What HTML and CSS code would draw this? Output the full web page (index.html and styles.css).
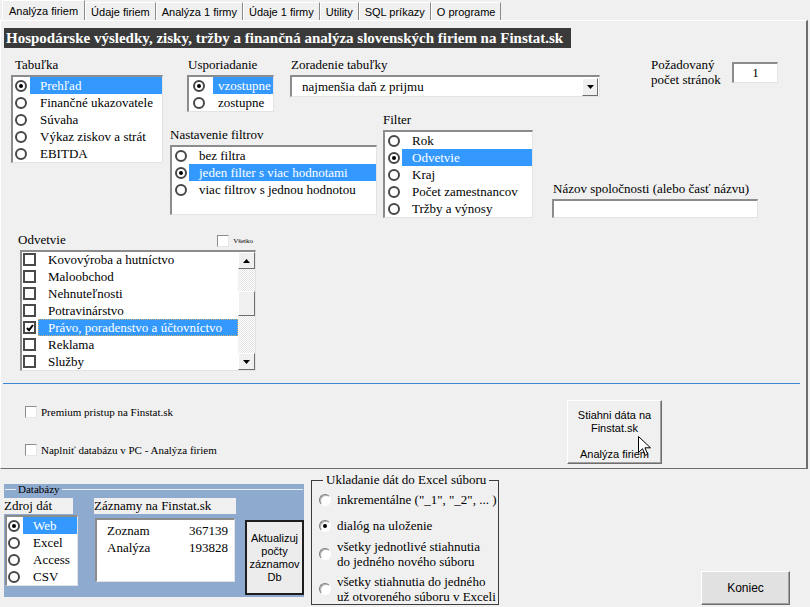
FILE: index.html
```html
<!DOCTYPE html>
<html lang="sk">
<head>
<meta charset="UTF-8">
<title>Analýza firiem</title>
<link rel="stylesheet" href="styles.css">
</head>
<body>
<div class="form">
  <!-- záložky -->
  <div class="tabs">
    <span class="tab active">Analýza firiem</span>
    <span class="tab">Údaje firiem</span>
    <span class="tab">Analýza 1 firmy</span>
    <span class="tab">Údaje 1 firmy</span>
    <span class="tab">Utility</span>
    <span class="tab">SQL príkazy</span>
    <span class="tab">O programe</span>
  </div>

  <div class="page">
    <div class="title">Hospodárske výsledky, zisky, tržby a finančná analýza slovenských firiem na Finstat.sk</div>

    <div class="top">
      <div class="tabulka">
        <div class="lbl">Tabuľka</div>
        <div class="list list-tab">
          <div class="opt sel"><span class="radio on"></span><span class="txt">Prehľad</span></div>
          <div class="opt"><span class="radio"></span><span class="txt">Finančné ukazovatele</span></div>
          <div class="opt"><span class="radio"></span><span class="txt">Súvaha</span></div>
          <div class="opt"><span class="radio"></span><span class="txt">Výkaz ziskov a strát</span></div>
          <div class="opt"><span class="radio"></span><span class="txt">EBITDA</span></div>
        </div>
      </div>

      <div class="mid">
        <div class="row1">
          <div class="uspor">
            <div class="lbl">Usporiadanie</div>
            <div class="list list-usp">
              <div class="opt sel"><span class="radio on"></span><span class="txt">vzostupne</span></div>
              <div class="opt"><span class="radio"></span><span class="txt">zostupne</span></div>
            </div>
          </div>
          <div class="zorad">
            <div class="lbl">Zoradenie tabuľky</div>
            <div class="combo">
              <span class="combo-txt">najmenšia daň z prijmu</span>
              <span class="drop"><svg width="7" height="4" viewBox="0 0 7 4"><path d="M0 0h7L3.5 4z" fill="#000"/></svg></span>
            </div>
          </div>
          <div class="pozad">
            <div class="pozad-txt">Požadovaný<br>počet stránok</div>
            <div class="field num">1</div>
          </div>
        </div>

        <div class="row2">
          <div class="nastav">
            <div class="lbl">Nastavenie filtrov</div>
            <div class="list list-nas">
              <div class="opt"><span class="radio"></span><span class="txt">bez filtra</span></div>
              <div class="opt sel"><span class="radio on"></span><span class="txt">jeden filter s viac hodnotami</span></div>
              <div class="opt"><span class="radio"></span><span class="txt">viac filtrov s jednou hodnotou</span></div>
            </div>
          </div>
          <div class="filter">
            <div class="lbl">Filter</div>
            <div class="list list-fil">
              <div class="opt"><span class="radio"></span><span class="txt">Rok</span></div>
              <div class="opt sel"><span class="radio on"></span><span class="txt">Odvetvie</span></div>
              <div class="opt"><span class="radio"></span><span class="txt">Kraj</span></div>
              <div class="opt"><span class="radio"></span><span class="txt">Počet zamestnancov</span></div>
              <div class="opt"><span class="radio"></span><span class="txt">Tržby a výnosy</span></div>
            </div>
          </div>
          <div class="nazov">
            <div class="lbl">Názov spoločnosti (alebo časť názvu)</div>
            <div class="field name"></div>
          </div>
        </div>
      </div>
    </div>

    <!-- odvetvia -->
    <div class="sector">
      <div class="sector-head">
        <span class="lbl">Odvetvie</span>
        <span class="all"><span class="cb3d"></span><span class="tiny">Všetko</span></span>
      </div>
      <div class="list list-sec">
        <div class="rows">
          <div class="opt"><span class="cb"></span><span class="txt">Kovovýroba a hutníctvo</span></div>
          <div class="opt"><span class="cb"></span><span class="txt">Maloobchod</span></div>
          <div class="opt"><span class="cb"></span><span class="txt">Nehnuteľnosti</span></div>
          <div class="opt"><span class="cb"></span><span class="txt">Potravinárstvo</span></div>
          <div class="opt sel focus"><span class="cb"><svg width="8" height="8" viewBox="0 0 8 8"><path d="M1 4l2 2.2L7 1" fill="none" stroke="#000" stroke-width="2"/></svg></span><span class="txt">Právo, poradenstvo a účtovníctvo</span></div>
          <div class="opt"><span class="cb"></span><span class="txt">Reklama</span></div>
          <div class="opt"><span class="cb"></span><span class="txt">Služby</span></div>
        </div>
        <div class="scroll">
          <span class="sb-btn"><svg width="7" height="4" viewBox="0 0 7 4"><path d="M0 4h7L3.5 0z" fill="#000"/></svg></span>
          <span class="thumb"></span>
          <span class="sb-btn down"><svg width="7" height="4" viewBox="0 0 7 4"><path d="M0 0h7L3.5 4z" fill="#000"/></svg></span>
        </div>
      </div>
    </div>

    <div class="sep"></div>

    <div class="actions">
      <div class="checks">
        <div class="chk"><span class="cb3d"></span>Premium pristup na Finstat.sk</div>
        <div class="chk"><span class="cb3d"></span>Naplniť databázu v PC - Analýza firiem</div>
      </div>
      <div class="btn btn-get">
        Stiahni dáta na<br>Finstat.sk<br><br>Analýza firiem
        <svg class="cursor" width="13" height="21" viewBox="0 0 13 21"><path d="M0.5 0.5v16l4-3.8 2.8 6.6 2.4-1-2.8-6.5h5.6z" fill="#fff" stroke="#000"/></svg>
      </div>
    </div>
  </div>

  <!-- spodná časť formulára -->
  <div class="footer">
    <div class="db">
      <div class="db-legend"><span>Databázy</span></div>
      <div class="db-body">
        <div class="src">
          <div class="src-lbl">Zdroj dát</div>
          <div class="list list-src">
            <div class="opt sel"><span class="radio on"></span><span class="txt">Web</span></div>
            <div class="opt"><span class="radio"></span><span class="txt">Excel</span></div>
            <div class="opt"><span class="radio"></span><span class="txt">Access</span></div>
            <div class="opt"><span class="radio"></span><span class="txt">CSV</span></div>
          </div>
        </div>
        <div class="rec">
          <div class="rec-lbl">Záznamy na Finstat.sk</div>
          <div class="list list-rec">
            <div class="rec-row"><span>Zoznam</span><span>367139</span></div>
            <div class="rec-row"><span>Analýza</span><span>193828</span></div>
          </div>
        </div>
        <div class="btn btn-upd">Aktualizuj<br>počty<br>záznamov<br>Db</div>
      </div>
    </div>

    <fieldset class="save">
      <legend>Ukladanie dát do Excel súboru</legend>
      <div class="sv-opt o1"><span class="rb"></span><span>inkrementálne ("_1", "_2", ... )</span></div>
      <div class="sv-opt o2"><span class="rb on"></span><span>dialóg na uloženie</span></div>
      <div class="sv-opt o3"><span class="rb"></span><span>všetky jednotlivé stiahnutia<br>do jedného nového súboru</span></div>
      <div class="sv-opt o4"><span class="rb"></span><span>všetky stiahnutia do jedného<br>už otvoreného súboru v Exceli</span></div>
    </fieldset>

    <div class="btn btn-end">Koniec</div>
  </div>
</div>
</body>
</html>
```

FILE: styles.css
```css
* {
    box-sizing: border-box;
}

body {
    margin: 0;
    background-color: #f0f0f0;
    font-family: "Liberation Serif", "Times New Roman", serif;
    font-size: 13px;
    color: #000;
}

.form {
    width: 810px;
    height: 607px;
    overflow: hidden;
}

/* záložky */
.tabs {
    display: flex;
    height: 20px;
    padding-left: 2px;
    font-family: "Liberation Sans", Arial, sans-serif;
    font-size: 11px;
}

.tab {
    height: 18px;
    margin-top: 2px;
    padding: 2px 5px 0 5px;
    border-top: 1px solid #fff;
    border-left: 1px solid #fff;
    border-right: 1px solid #8a8a8a;
    line-height: 14px;
    white-space: nowrap;
}

.tab.active {
    height: 20px;
    margin-top: 0;
    padding: 3px 6px 0 6px;
}

/* stránka záložky */
.page {
    width: 808px;
    height: 449px;
    border-top: 1px solid #fff;
    border-left: 1px solid #fff;
    border-right: 2px solid #6e6e6e;
    border-bottom: 1px solid #6e6e6e;
}

.title {
    margin: 7px 0 0 3px;
    width: 567px;
    height: 20px;
    padding-left: 2px;
    background-color: #3a3a3a;
    color: #fff;
    font-weight: bold;
    font-size: 15px;
    line-height: 20px;
    white-space: nowrap;
    overflow: hidden;
}

.lbl {
    height: 16px;
    line-height: 16px;
    margin-bottom: 2px;
    white-space: nowrap;
}

/* zoznamy */
.list {
    background-color: #fff;
    border-style: solid;
    border-width: 2px 1px 1px 2px;
    border-color: #8c8c8c #e3e3e3 #e3e3e3 #8c8c8c;
    overflow: hidden;
}

.opt {
    display: flex;
    align-items: center;
    height: 17px;
    padding-left: 3px;
}

.txt {
    flex: 1;
    height: 17px;
    line-height: 17px;
    margin-left: 2px;
    padding-left: 10px;
    white-space: nowrap;
}

.sel .txt {
    background-color: #3399ff;
    color: #fff;
}

.focus .txt {
    outline: 1px dotted #c8b070;
    outline-offset: -1px;
}

.radio {
    position: relative;
    flex: none;
    width: 12px;
    height: 12px;
    border: 2px solid #474747;
    border-radius: 50%;
    background-color: #fff;
}

.radio.on::after {
    content: "";
    position: absolute;
    left: 2px;
    top: 2px;
    width: 4px;
    height: 4px;
    border-radius: 50%;
    background-color: #000;
}

.cb {
    display: flex;
    align-items: center;
    justify-content: center;
    flex: none;
    width: 13px;
    height: 13px;
    border: 2px solid #4a4a4a;
    background-color: #fff;
}

.cb3d {
    flex: none;
    width: 12px;
    height: 12px;
    background-color: #fff;
    border-style: solid;
    border-width: 1px;
    border-color: #8c8c8c #e6e6e6 #e6e6e6 #8c8c8c;
}

.field {
    background-color: #fff;
    border-style: solid;
    border-width: 2px 1px 1px 2px;
    border-color: #8c8c8c #e3e3e3 #e3e3e3 #8c8c8c;
}

/* horná časť */
.top {
    display: flex;
    margin-top: 9px;
    padding-left: 10px;
}

.tabulka {
    width: 152px;
}

.tabulka .lbl {
    padding-left: 4px;
}

.list-tab {
    height: 88px;
}

.list-tab .opt {
    padding-left: 2px;
}

.list-tab .txt {
    margin-left: 3px;
}

.mid {
    display: flex;
    flex-direction: column;
    margin-left: 7px;
}

.row1 {
    display: flex;
    height: 55px;
}

.uspor {
    width: 87px;
    margin-left: 17px;
}

.uspor .lbl {
    padding-left: 1px;
}

.list-usp {
    height: 37px;
}

.list-usp .opt {
    padding-left: 4px;
}

.list-usp .txt {
    margin-left: 8px;
    padding-left: 5px;
}

.zorad {
    width: 310px;
    margin-left: 16px;
}

.zorad .lbl {
    padding-left: 1px;
}

.combo {
    display: flex;
    align-items: center;
    height: 22px;
    background-color: #fff;
    border-style: solid;
    border-width: 2px 1px 1px 2px;
    border-color: #8c8c8c #e3e3e3 #e3e3e3 #8c8c8c;
}

.combo-txt {
    flex: 1;
    padding-left: 10px;
}

.drop {
    display: flex;
    align-items: center;
    justify-content: center;
    width: 16px;
    height: 18px;
    margin-right: 1px;
    background-color: #f0f0f0;
    border: 1px solid;
    border-color: #fff #6e6e6e #6e6e6e #fff;
}

.pozad {
    display: flex;
    margin-left: 51px;
}

.pozad-txt {
    width: 81px;
    line-height: 15px;
}

.num {
    width: 46px;
    height: 21px;
    margin-top: 5px;
    text-align: center;
    line-height: 18px;
}

.row2 {
    display: flex;
    align-items: flex-start;
}

.nastav {
    width: 207px;
    margin-top: 15px;
}

.list-nas {
    height: 70px;
}

.filter {
    width: 150px;
    margin-left: 6px;
}

.list-fil {
    height: 88px;
}

.nazov {
    margin-left: 19px;
    margin-top: 69px;
}

.nazov .lbl {
    padding-left: 1px;
}

.name {
    width: 206px;
    height: 19px;
}

/* odvetvia */
.sector {
    width: 238px;
    margin: 14px 0 0 17px;
}

.sector-head {
    display: flex;
    align-items: center;
    height: 18px;
}

.all {
    display: flex;
    align-items: center;
    margin-left: auto;
    margin-right: 3px;
}

.tiny {
    margin-left: 4px;
    font-size: 7px;
}

.list-sec {
    display: flex;
    height: 121px;
    margin-left: 2px;
}

.rows {
    flex: 1;
    margin-top: -1px;
}

.list-sec .opt {
    padding-left: 1px;
}

.scroll {
    display: flex;
    flex-direction: column;
    width: 17px;
    background: repeating-conic-gradient(#fff 0 25%, #e4e4e4 0 50%) 0 0 / 2px 2px;
}

.sb-btn {
    display: flex;
    align-items: center;
    justify-content: center;
    height: 17px;
    background-color: #f0f0f0;
    border: 1px solid;
    border-color: #fff #6e6e6e #6e6e6e #fff;
}

.thumb {
    height: 25px;
    margin-top: 22px;
    background-color: #f0f0f0;
    border: 1px solid;
    border-color: #fff #6e6e6e #6e6e6e #fff;
}

.sb-btn.down {
    margin-top: auto;
}

.sep {
    width: 797px;
    height: 1px;
    margin: 12px 0 0 2px;
    background-color: #3d86d6;
}

/* spodok záložky */
.actions {
    display: flex;
    margin-top: 16px;
}

.checks {
    width: 542px;
    margin-left: 24px;
    padding-top: 5px;
    font-size: 11px;
}

.chk {
    display: flex;
    align-items: center;
    height: 14px;
    white-space: nowrap;
}

.chk + .chk {
    margin-top: 24px;
}

.chk .cb3d {
    margin-right: 4px;
}

.btn {
    font-family: "Liberation Sans", Arial, sans-serif;
    font-size: 11px;
    text-align: center;
    background-color: #f0f0f0;
    border: 1px solid;
    border-color: #fff #6e6e6e #6e6e6e #fff;
    box-shadow: inset -1px -1px 0 #a0a0a0;
}

.btn-get {
    position: relative;
    width: 95px;
    height: 64px;
    padding-top: 8px;
    line-height: 13px;
}

.cursor {
    position: absolute;
    left: 70px;
    top: 35px;
}

/* spodná časť */
.footer {
    display: flex;
    align-items: flex-start;
    padding-left: 4px;
}

.db {
    width: 300px;
    height: 113px;
    margin-top: 15px;
    background-color: #8eabcf;
}

.db-legend {
    display: flex;
    align-items: center;
    height: 11px;
    margin: 0 1px;
    font-size: 11px;
    line-height: 11px;
}

.db-legend::before {
    content: "";
    width: 11px;
    border-top: 1px solid #e8eef6;
}

.db-legend::after {
    content: "";
    flex: 1;
    border-top: 1px solid #e8eef6;
}

.db-legend span {
    padding: 0 2px;
}

.db-body {
    display: flex;
    align-items: flex-start;
    margin-top: 3px;
}

.src {
    width: 74px;
}

.src-lbl,
.rec-lbl {
    height: 16px;
    line-height: 16px;
    background-color: #f0f0f0;
    white-space: nowrap;
}

.src-lbl {
    width: 69px;
}

.list-src {
    width: 73px;
    height: 71px;
    margin: 1px 0 0 1px;
}

.list-src .opt {
    padding-left: 1px;
}

.list-src .txt {
    margin-left: 3px;
}

.rec {
    width: 142px;
    margin-left: 16px;
}

.list-rec {
    width: 140px;
    height: 64px;
    margin: 4px 0 0 1px;
    padding: 2px 6px 0 10px;
}

.rec-row {
    display: flex;
    justify-content: space-between;
    line-height: 17px;
}

.btn-upd {
    display: flex;
    align-items: center;
    justify-content: center;
    width: 59px;
    height: 75px;
    margin: 22px 0 0 9px;
    line-height: 13px;
    background-color: #ececec;
    border: 2px solid #1e1e1e;
    box-shadow: none;
}

.save {
    width: 188px;
    height: 132px;
    margin: 4px 0 0 7px;
    padding: 0;
    border: 1px solid #3c3c3c;
}

.save legend {
    margin-left: 11px;
    padding: 0 3px;
    line-height: 14px;
}

.sv-opt {
    display: flex;
    align-items: center;
    margin-left: 7px;
    line-height: 15px;
    white-space: nowrap;
}

.sv-opt.o1 {
    margin-top: 5px;
}

.sv-opt.o2 {
    margin-top: 11px;
}

.sv-opt.o3 {
    margin-top: 6px;
}

.sv-opt.o4 {
    margin-top: 5px;
}

.rb {
    position: relative;
    flex: none;
    width: 12px;
    height: 12px;
    margin-right: 6px;
    border-radius: 50%;
    background-color: #fff;
    border: 1px solid;
    border-color: #7a7a7a #fff #fff #7a7a7a;
    box-shadow: inset 1px 1px 0 #b4b4b4;
}

.rb.on::after {
    content: "";
    position: absolute;
    left: 3px;
    top: 3px;
    width: 4px;
    height: 4px;
    border-radius: 50%;
    background-color: #000;
}

.btn-end {
    width: 89px;
    height: 34px;
    margin: 102px 0 0 202px;
    line-height: 32px;
    font-size: 12px;
    background-color: #e1e1e1;
}
```
